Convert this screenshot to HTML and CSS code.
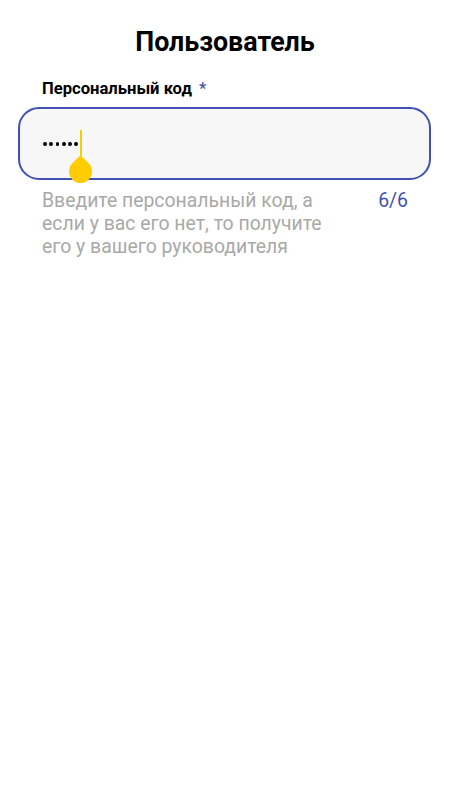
FILE: index.html
```html
<!DOCTYPE html>
<html lang="ru">
<head>
  <meta charset="UTF-8" />
  <meta name="viewport" content="width=device-width, initial-scale=1.0" />
  <title>Пользователь</title>
  <link rel="stylesheet" href="styles.css">
</head>
<body>

  <div class="screen">
    <h1 class="title">Пользователь</h1>

    <!-- Personal code field -->
    <div class="field-label">Персональный код <span class="required">*</span></div>

    <div class="field">
      <div class="dots">
        <span></span><span></span><span></span><span></span><span></span><span></span>
      </div>
      <div class="caret">
        <div class="caret-line"></div>
        <div class="caret-handle"></div>
      </div>
    </div>

    <div class="helper">
      <p class="helper-text">Введите персональный код, а если у вас его нет, то получите его у вашего руководителя</p>
      <span class="counter">6/6</span>
    </div>
  </div>

</body>
</html>
```

FILE: styles.css
```css
:root {
  --accent: #3f51b5;
  --caret: #ffcc00;
}

* {
  margin: 0;
  padding: 0;
  box-sizing: border-box;
}

html, body {
  height: 100%;
  background-color: #fff;
  font-family: 'Roboto', 'Noto Sans', sans-serif;
  color: #000;
}

.screen {
  padding: 26px 19px 0 18px;
}

.title {
  font-size: 26.8px;
  font-weight: 700;
  line-height: 32px;
  text-align: center;
  margin-left: 1px;
}

.field-label {
  margin-top: 21px;
  padding-left: 24px;
  font-size: 16.6px;
  font-weight: 700;
  line-height: 20px;
}

.required {
  color: var(--accent);
  font-weight: 500;
  margin-left: 3px;
}

/* Input box */
.field {
  position: relative;
  margin-top: 8px;
  height: 73px;
  border: 2px solid var(--accent);
  border-radius: 21px;
  background-color: #f7f7f7;
  display: flex;
  align-items: center;
  padding-left: 23px;
}

.dots {
  display: flex;
  gap: 2.5px;
  margin-top: 1px;
}

.dots span {
  width: 3.8px;
  height: 3.8px;
  border-radius: 50%;
  background-color: #000;
}

.caret {
  position: absolute;
  left: 59px;
  top: 21px;
  width: 24px;
}

.caret-line {
  width: 2px;
  height: 30px;
  margin-left: 1px;
  background-color: var(--caret);
}

.caret-handle {
  position: absolute;
  left: -10px;
  top: 30px;
  width: 23px;
  height: 23px;
  background-color: var(--caret);
  border-radius: 0 50% 50% 50%;
  transform: rotate(45deg);
}

/* Helper row */
.helper {
  display: flex;
  justify-content: space-between;
  align-items: flex-start;
  padding: 9px 23px 0 24px;
}

.helper-text {
  max-width: 295px;
  font-size: 19.4px;
  line-height: 23px;
  color: #a9a9a9;
}

.counter {
  font-size: 19.4px;
  line-height: 23px;
  color: var(--accent);
}
```
